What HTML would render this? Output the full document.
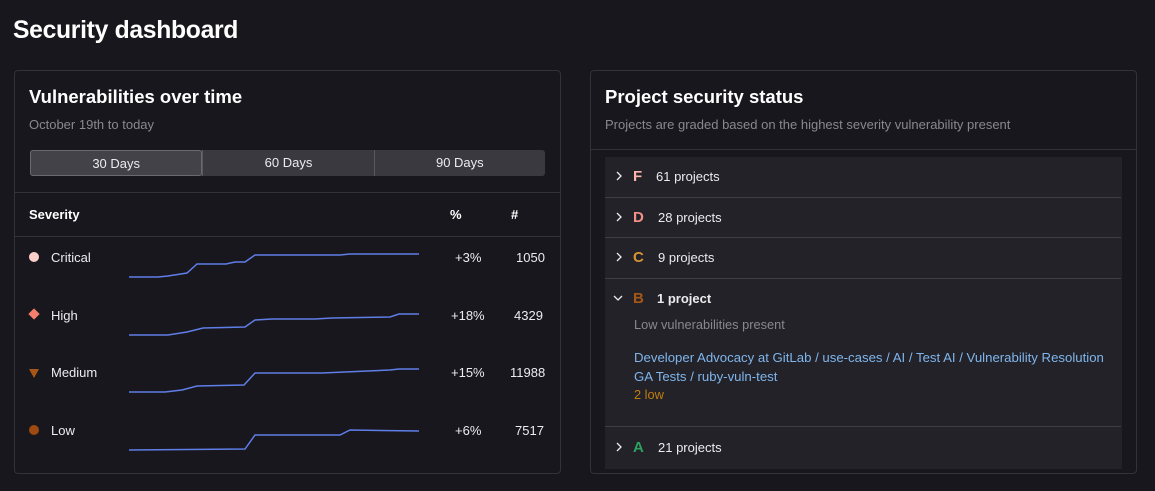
<!DOCTYPE html>
<html><head><style>
*{box-sizing:border-box;margin:0;padding:0}
body{width:1155px;height:491px;background:#18171d;color:#ececef;font-family:"Liberation Sans",sans-serif;position:relative;overflow:hidden}
.abs{position:absolute}
h1{position:absolute;left:13px;top:17px;font-size:24.7px;font-weight:bold;color:#fff;letter-spacing:-0.3px}
.card{position:absolute;top:70px;width:547px;height:404px;border:1px solid #333238;border-radius:4px;background:#18171d}
.ct{position:absolute;left:14px;top:15px;font-size:18.5px;font-weight:bold;color:#fff}
.cs{position:absolute;left:14px;top:46px;font-size:13px;color:#89888d}
.seg{position:absolute;left:15px;top:79px;width:515px;height:26px;background:#3a393f;border-radius:3px;display:flex}
.seg div{flex:1;text-align:center;font-size:13px;line-height:26px;color:#ececef;border-left:1px solid #5a595f}
.seg div:first-child{border:1px solid #6a696f;background:#434248;border-radius:3px}
.hr{position:absolute;left:0;right:0;height:1px;background:#333238}
.th{font-size:13px;font-weight:bold;color:#fff}
.lbl{font-size:13px;color:#ececef}
</style></head><body>
<h1>Security dashboard</h1>

<div class="card" style="left:14px">
<div class="ct">Vulnerabilities over time</div>
<div class="cs">October 19th to today</div>
<div class="seg"><div>30 Days</div><div>60 Days</div><div>90 Days</div></div>
<div class="hr" style="top:121px"></div>
<div class="abs th" style="left:14px;top:136px">Severity</div>
<div class="abs th" style="left:435px;top:136px">%</div>
<div class="abs th" style="left:496px;top:136px">#</div>
<div class="hr" style="top:165px"></div>
</div>

<div class="abs" style="left:29px;top:252px;width:10px;height:10px;border-radius:50%;background:#fcd0c8"></div>
<div class="abs lbl" style="left:51px;top:250px">Critical</div>
<div class="abs" style="left:30px;top:310px;width:8px;height:8px;background:#f57f6c;transform:rotate(45deg)"></div>
<div class="abs lbl" style="left:51px;top:308px">High</div>
<div class="abs" style="left:29px;top:369px;width:0;height:0;border-left:5px solid transparent;border-right:5px solid transparent;border-top:9px solid #a65716"></div>
<div class="abs lbl" style="left:51px;top:365px">Medium</div>
<div class="abs" style="left:29px;top:425px;width:10px;height:10px;border-radius:50%;background:#9e4a10"></div>
<div class="abs lbl" style="left:51px;top:423px">Low</div>

<svg class="abs" style="left:0;top:0" width="1155" height="491" fill="none" stroke="#5f7ee8" stroke-width="1.5">
<polyline points="129,277 158,277 168,276 187,273 197,264 226,264 235,262 245,262 255,255 340,255 350,254 419,254"/>
<polyline points="129,335 168,335 187,332 203,328 245,327 255,320 272,319 315,319 332,318 390,317 399,314 419,314"/>
<polyline points="129,392 165,392 182,390 197,386 244,385 255,373 322,373 390,370 399,369 419,369"/>
<polyline points="129,450 245,449 255,435 340,435 350,430 419,431"/>
</svg>

<div class="abs lbl" style="left:455px;top:250px">+3%</div><div class="abs lbl" style="left:516px;top:250px">1050</div>
<div class="abs lbl" style="left:451px;top:308px">+18%</div><div class="abs lbl" style="left:514px;top:308px">4329</div>
<div class="abs lbl" style="left:451px;top:365px">+15%</div><div class="abs lbl" style="left:510px;top:365px">11988</div>
<div class="abs lbl" style="left:455px;top:423px">+6%</div><div class="abs lbl" style="left:515px;top:423px">7517</div>

<div class="card" style="left:590px">
<div class="ct">Project security status</div>
<div class="cs">Projects are graded based on the highest severity vulnerability present</div>
<div class="hr" style="top:78px"></div>
<div class="abs" style="left:14px;top:86px;width:517px;height:312px;background:#232228"></div>
<div class="hr" style="top:126px;left:14px;right:15px;background:#3e3d43"></div>
<div class="hr" style="top:166px;left:14px;right:15px;background:#3e3d43"></div>
<div class="hr" style="top:207px;left:14px;right:15px;background:#3e3d43"></div>
<div class="hr" style="top:355px;left:14px;right:15px;background:#3e3d43"></div>
</div>

<svg class="abs" style="left:0;top:0" width="1155" height="491" fill="none" stroke="#ececef" stroke-width="1.3">
<polyline points="617,172 621,176 617,180"/>
<polyline points="617,213 621,217 617,221"/>
<polyline points="617,253 621,257 617,261"/>
<polyline points="614,296 618,300 622,296"/>
<polyline points="617,443 621,447 617,451"/>
</svg>
<div class="abs" style="left:633px;top:168px;font-size:15px;font-weight:bold;color:#fcb5aa">F</div>
<div class="abs lbl" style="left:656px;top:169px">61 projects</div>
<div class="abs" style="left:633px;top:209px;font-size:15px;font-weight:bold;color:#f5918a">D</div>
<div class="abs lbl" style="left:658px;top:210px">28 projects</div>
<div class="abs" style="left:633px;top:249px;font-size:15px;font-weight:bold;color:#d99530">C</div>
<div class="abs lbl" style="left:658px;top:250px">9 projects</div>
<div class="abs" style="left:633px;top:290px;font-size:15px;font-weight:bold;color:#a65716">B</div>
<div class="abs lbl" style="left:657px;top:291px;font-weight:bold">1 project</div>
<div class="abs" style="left:634px;top:317px;font-size:12.8px;color:#89888d">Low vulnerabilities present</div>
<div class="abs" style="left:634px;top:348px;font-size:13.2px;color:#7fb6ed;line-height:19px;white-space:nowrap">Developer Advocacy at GitLab / use-cases / AI / Test AI / Vulnerability Resolution<br>GA Tests / ruby-vuln-test</div>
<div class="abs" style="left:634px;top:387px;font-size:12.8px;color:#c17d10">2 low</div>
<div class="abs" style="left:633px;top:439px;font-size:15px;font-weight:bold;color:#2da160">A</div>
<div class="abs lbl" style="left:658px;top:440px">21 projects</div>
</body></html>
